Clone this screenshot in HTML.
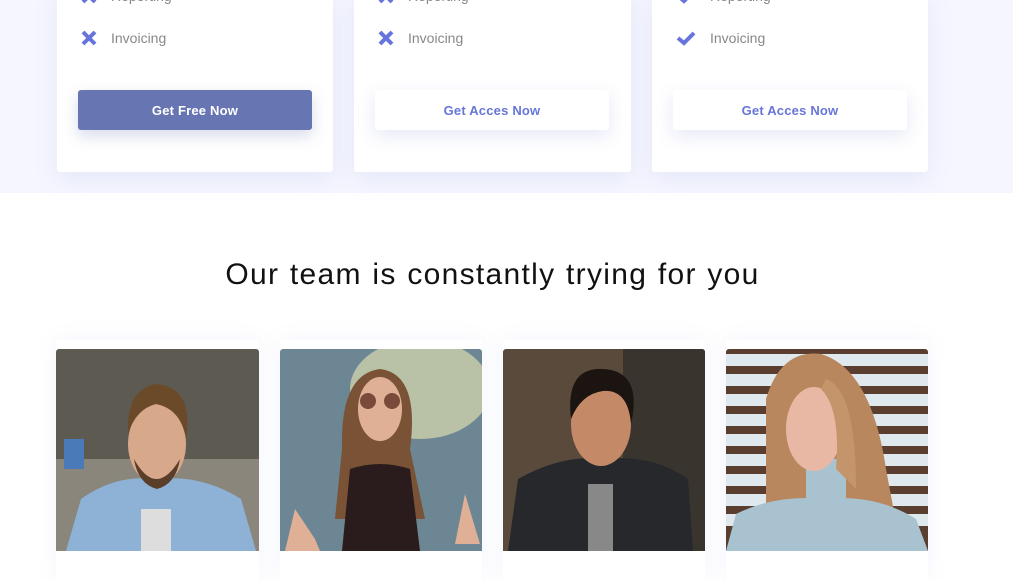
<!DOCTYPE html>
<html><head><meta charset="utf-8"><style>
*{margin:0;padding:0;box-sizing:border-box}
body{width:1013px;height:565px;overflow:hidden;background:#fff;font-family:"Liberation Sans",sans-serif;position:relative}
.top{position:absolute;left:0;top:0;width:1013px;height:193px;background:#f5f6fe}
.card{position:absolute;top:-10px;height:182px;background:#fff;border-radius:3px;box-shadow:0 8px 25px rgba(120,130,220,.12)}
.item{position:absolute;left:24px;font-size:14px;color:#888;display:flex;align-items:center;gap:14px}
.btn{position:absolute;top:100px;left:21px;width:234px;height:40px;border-radius:3px;font-size:13px;font-weight:bold;display:flex;align-items:center;justify-content:center;letter-spacing:.2px}
.b1{background:#6875b3;color:#fff;box-shadow:0 6px 15px rgba(100,110,180,.25)}
.b2{background:#fff;color:#6876d8;box-shadow:0 6px 18px rgba(100,110,200,.16)}
h2{position:absolute;top:258px;left:0;width:985px;text-align:center;font-size:30px;font-weight:normal;color:#111;letter-spacing:1.3px;word-spacing:1px}
.ph{position:absolute;top:349px;height:202px;overflow:hidden;border-radius:3px 3px 0 0}
.pc{position:absolute;top:340px;height:240px;background:#fff;box-shadow:0 0 20px rgba(120,130,220,.08)}
</style></head><body>
<div class="top"></div>
<div class="card" style="left:57px;width:276px">
 <div class="item" style="top:-2px"><svg width="16" height="16" viewBox="0 0 16 16"><path d="M2 2L14 14M14 2L2 14" stroke="#6674dc" stroke-width="4"/></svg>Reporting</div>
 <div class="item" style="top:40px"><svg width="16" height="16" viewBox="0 0 16 16"><path d="M2 2L14 14M14 2L2 14" stroke="#6674dc" stroke-width="4"/></svg>Invoicing</div>
 <div class="btn b1">Get Free Now</div></div>
<div class="card" style="left:354px;width:277px">
 <div class="item" style="top:-2px"><svg width="16" height="16" viewBox="0 0 16 16"><path d="M2 2L14 14M14 2L2 14" stroke="#6674dc" stroke-width="4"/></svg>Reporting</div>
 <div class="item" style="top:40px"><svg width="16" height="16" viewBox="0 0 16 16"><path d="M2 2L14 14M14 2L2 14" stroke="#6674dc" stroke-width="4"/></svg>Invoicing</div>
 <div class="btn b2">Get Acces Now</div></div>
<div class="card" style="left:652px;width:276px">
 <div class="item" style="top:-2px"><svg width="20" height="16" viewBox="0 0 20 16"><path d="M2 8L8 13L18 3" stroke="#6674dc" stroke-width="4" fill="none"/></svg>Reporting</div>
 <div class="item" style="top:40px"><svg width="20" height="16" viewBox="0 0 20 16"><path d="M2 8L8 13L18 3" stroke="#6674dc" stroke-width="4" fill="none"/></svg>Invoicing</div>
 <div class="btn b2">Get Acces Now</div></div>
<h2>Our team is constantly trying for you</h2>

<div class="pc" style="left:56px;width:203px"></div>
<div class="pc" style="left:280px;width:202px"></div>
<div class="pc" style="left:503px;width:202px"></div>
<div class="pc" style="left:726px;width:202px"></div>

<svg class="ph" style="left:56px" width="203" height="202" viewBox="0 0 203 202">
<rect width="203" height="202" fill="#5d5a52"/><rect y="110" width="203" height="92" fill="#8a867c"/>
<rect x="8" y="90" width="20" height="30" fill="#4a7ab8"/>
<path d="M10 202L25 150Q60 125 100 130Q145 125 185 150L200 202Z" fill="#8eb2d6"/>
<rect x="85" y="160" width="30" height="42" fill="#ddd"/>
<ellipse cx="101" cy="95" rx="29" ry="40" fill="#d8a88a"/>
<path d="M72 85Q70 40 100 35Q138 38 130 90Q125 60 100 55Q80 60 72 85Z" fill="#6b4a2a"/>
<path d="M78 110Q100 150 124 110Q120 135 101 140Q82 135 78 110Z" fill="#5a3e2a"/>
</svg>
<svg class="ph" style="left:280px" width="202" height="202" viewBox="0 0 202 202">
<rect width="202" height="202" fill="#6d8694"/><ellipse cx="140" cy="40" rx="70" ry="50" fill="#b9c2a6"/>
<path d="M100 20Q60 25 62 100L55 170L145 170L130 100Q140 25 100 20Z" fill="#7a5236"/>
<ellipse cx="100" cy="60" rx="22" ry="32" fill="#e0b096"/>
<circle cx="88" cy="52" r="8" fill="#7a4b3a"/><circle cx="112" cy="52" r="8" fill="#7a4b3a"/>
<path d="M70 120Q100 110 130 120L140 202L62 202Z" fill="#2a1c1c"/>
<path d="M15 160L35 190L40 202L5 202Z" fill="#e0b096"/><path d="M185 145L175 195L200 195Z" fill="#e0b096"/>
</svg>
<svg class="ph" style="left:503px" width="202" height="202" viewBox="0 0 202 202">
<rect width="202" height="202" fill="#5a4a3c"/><rect x="120" width="82" height="202" fill="#3a342e"/>
<path d="M5 202L15 130Q60 105 100 110Q150 105 185 130L190 202Z" fill="#26282c"/>
<rect x="85" y="135" width="25" height="67" fill="#888"/>
<ellipse cx="98" cy="75" rx="30" ry="42" fill="#c48a68"/>
<path d="M68 70Q62 18 100 20Q140 22 128 75Q125 40 100 42Q78 45 68 70Z" fill="#1c1410"/>
</svg>
<svg class="ph" style="left:726px" width="202" height="202" viewBox="0 0 202 202">
<rect width="202" height="202" fill="#5a3e30"/>
<g fill="#dfe8ec"><rect y="5" width="202" height="12"/><rect y="25" width="202" height="12"/><rect y="45" width="202" height="12"/><rect y="65" width="202" height="12"/><rect y="85" width="202" height="12"/><rect y="105" width="202" height="12"/><rect y="125" width="202" height="12"/><rect y="145" width="202" height="12"/><rect y="165" width="202" height="12"/></g>
<path d="M40 50Q55 0 95 5Q145 20 160 120L175 200L40 202Z" fill="#b8875e"/>
<path d="M0 202L10 165Q50 145 100 150Q150 145 190 170L202 202Z" fill="#a9c2d0"/>
<rect x="80" y="110" width="40" height="60" fill="#a9c2d0"/>
<ellipse cx="88" cy="80" rx="28" ry="42" fill="#e8b8a4"/>
<path d="M100 30Q130 40 130 140L110 120Q115 60 95 40Z" fill="#c4946a"/>
</svg>
</body></html>
